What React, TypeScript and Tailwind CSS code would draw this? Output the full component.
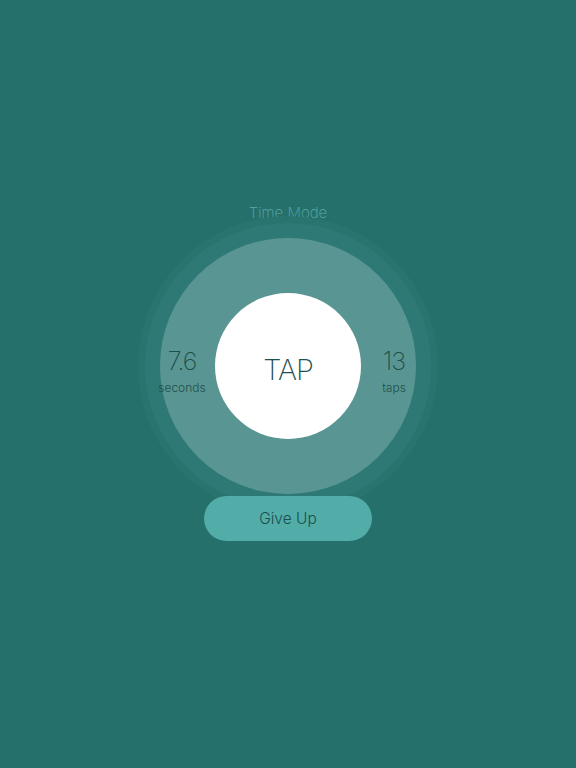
type StatProps = {
  value: string;
  label: string;
};

function Stat({ value, label }: StatProps) {
  return (
    <div className="mt-[11px] flex w-[60px] flex-col items-center">
      <span className="text-[25px] leading-[28px] font-extralight tracking-[-1px] text-[#1d4f4c]">
        {value}
      </span>
      <span className="mt-[5px] text-[12px] leading-[16px] font-light text-[#1d4f4c]">
        {label}
      </span>
    </div>
  );
}

export default function App() {
  return (
    <div
      className="flex min-h-[768px] w-full flex-col items-center bg-[#26706c] pt-[203px]"
      style={{ fontFamily: "Inter, 'Noto Sans', sans-serif" }}
    >
      <p className="text-[15px] leading-[20px] font-extralight text-[#5aaba6]">
        Time Mode
      </p>

      {/* rings */}
      <div className="-mt-[7px] flex h-[300px] w-[300px] items-center justify-center rounded-full bg-[#29746f]">
        <div className="flex h-[286px] w-[286px] items-center justify-center rounded-full bg-[#2e7975]">
          <div className="flex h-[256px] w-[256px] items-center justify-center rounded-full bg-[#599693]">
            <div className="flex items-center gap-[3px]">
              <Stat value="7.6" label="seconds" />
              <button className="flex h-[146px] w-[146px] items-center justify-center rounded-full bg-white">
                <span className="mt-[6px] text-[29px] leading-none font-extralight tracking-[-1px] text-[#1d4f4c]">
                  TAP
                </span>
              </button>
              <Stat value="13" label="taps" />
            </div>
          </div>
        </div>
      </div>

      <button className="-mt-[20px] flex h-[45px] w-[168px] items-center justify-center rounded-full bg-[#52aca8]">
        <span className="text-[15.5px] font-light text-[#1b4f4c]">Give Up</span>
      </button>
    </div>
  );
}
